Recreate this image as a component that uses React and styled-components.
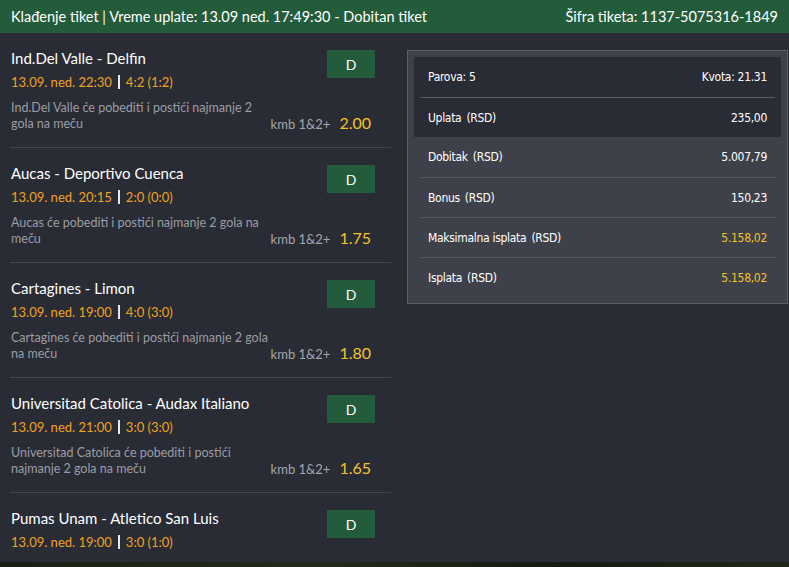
import React from 'react';
import styled, { createGlobalStyle } from 'styled-components';

const GlobalStyle = createGlobalStyle`
  html, body {
    margin: 0;
    padding: 0;
    background: #292c35;
  }
  body {
    font-family: 'Lato', 'Liberation Sans', sans-serif;
  }
`;

const Page = styled.div`
  width: 789px;
  height: 567px;
  display: flex;
  flex-direction: column;
  overflow: hidden;
  background: #292c35;
`;

const Header = styled.div`
  height: 33px;
  flex-shrink: 0;
  background: #235c3b;
  color: #fff;
  display: flex;
  align-items: center;
  justify-content: space-between;
  padding: 0 11px;
  font-size: 14.5px;
`;

const Body = styled.div`
  flex: 1;
  display: flex;
  align-items: flex-start;
  overflow: hidden;
  padding-left: 10px;
`;

const Footer = styled.div`
  height: 5px;
  flex-shrink: 0;
  background: linear-gradient(90deg, #1b1e17, #232a1e 40%, #171a14 70%, #20261b);
`;

const List = styled.div`
  width: 381px;
  flex-shrink: 0;
`;

const Match = styled.div`
  height: 115px;
  box-sizing: border-box;
  border-bottom: 1px solid #43464e;
  padding: 15px 0 0 1px;
  position: relative;
`;

const Title = styled.div`
  color: #fff;
  font-size: 15px;
  line-height: 20px;
`;

const When = styled.div`
  color: #f0a21f;
  font-size: 13px;
  line-height: 16px;
  margin-top: 6px;
  display: flex;
  align-items: center;
`;

const Bar = styled.span`
  display: inline-block;
  width: 2px;
  height: 14px;
  background: #e8e8e8;
  margin: 0 6px;
`;

const Pick = styled.div`
  display: flex;
  align-items: flex-end;
  justify-content: space-between;
  margin-top: 10px;
  width: 360px;
`;

const Desc = styled.div`
  color: #9b9da4;
  font-size: 12.5px;
  line-height: 16px;
  width: 265px;
`;

const Market = styled.div`
  display: flex;
  align-items: baseline;
  flex-shrink: 0;
  white-space: nowrap;
  gap: 9px;
  color: #a4a6ad;
  font-size: 13px;
`;

const Odd = styled.span`
  color: #f5c22b;
  font-size: 16px;
`;

const Badge = styled.div`
  width: 48px;
  height: 28px;
  background: #235c3b;
  color: #fff;
  font-size: 14px;
  display: flex;
  align-items: center;
  justify-content: center;
  position: absolute;
  right: 16px;
  top: 17px;
`;

const Summary = styled.div`
  margin: 17px 0 0 16px;
  width: 381px;
  box-sizing: border-box;
  border: 1px solid #5b5e66;
  background: #3f414a;
  padding: 6px;
  font-family: 'DejaVu Sans', sans-serif;
  font-stretch: condensed;
  color: #fff;
  font-size: 12px;
  letter-spacing: -0.3px;
`;

const Stake = styled.div`
  background: #292c35;
  padding: 0 6px;
`;

const Row = styled.div`
  height: 40px;
  display: flex;
  align-items: center;
  justify-content: space-between;
  padding: 0 8px;
  border-top: ${({ $first }) => ($first ? 'none' : '1px solid #575a62')};
  box-sizing: border-box;
  margin: 0 ${({ $inset }) => ($inset ? '0' : '6px')};
`;

const Value = styled.span`
  color: ${({ $gold }) => ($gold ? '#f5c22b' : '#fff')};
`;

const Unit = styled.span`
  margin-left: 5px;
`;

const matches = [
  {
    title: 'Ind.Del Valle - Delfin',
    time: '13.09. ned. 22:30',
    score: '4:2 (1:2)',
    desc: 'Ind.Del Valle će pobediti i postići najmanje 2 gola na meču',
    odd: '2.00',
  },
  {
    title: 'Aucas - Deportivo Cuenca',
    time: '13.09. ned. 20:15',
    score: '2:0 (0:0)',
    desc: 'Aucas će pobediti i postići najmanje 2 gola na meču',
    odd: '1.75',
  },
  {
    title: 'Cartagines - Limon',
    time: '13.09. ned. 19:00',
    score: '4:0 (3:0)',
    desc: 'Cartagines će pobediti i postići najmanje 2 gola na meču',
    odd: '1.80',
  },
  {
    title: 'Universitad Catolica - Audax Italiano',
    time: '13.09. ned. 21:00',
    score: '3:0 (3:0)',
    desc: 'Universitad Catolica će pobediti i postići najmanje 2 gola na meču',
    odd: '1.65',
  },
  {
    // cut off by the viewport, pick row not visible
    title: 'Pumas Unam - Atletico San Luis',
    time: '13.09. ned. 19:00',
    score: '3:0 (1:0)',
  },
];

const totals = [
  { label: 'Dobitak', value: '5.007,79' },
  { label: 'Bonus', value: '150,23' },
  { label: 'Maksimalna isplata', value: '5.158,02', gold: true },
  { label: 'Isplata', value: '5.158,02', gold: true },
];

const App = () => (
  <Page>
    <GlobalStyle />
    <Header>
      <span>Klađenje tiket | Vreme uplate: 13.09 ned. 17:49:30 - Dobitan tiket</span>
      <span>Šifra tiketa: 1137-5075316-1849</span>
    </Header>
    <Body>
      <List>
        {matches.map((m) => (
          <Match key={m.title}>
            <Title>{m.title}</Title>
            <When>
              {m.time}
              <Bar />
              {m.score}
            </When>
            {m.desc && (
              <Pick>
                <Desc>{m.desc}</Desc>
                <Market>
                  kmb 1&amp;2+ <Odd>{m.odd}</Odd>
                </Market>
              </Pick>
            )}
            <Badge>D</Badge>
          </Match>
        ))}
      </List>
      <Summary>
        <Stake>
          <Row $first $inset>
            <span>Parova: 5</span>
            <span>Kvota: 21.31</span>
          </Row>
          <Row $inset>
            <span>
              Uplata<Unit>(RSD)</Unit>
            </span>
            <Value>235,00</Value>
          </Row>
        </Stake>
        {totals.map((t, i) => (
          <Row key={t.label} $first={i === 0}>
            <span>
              {t.label}
              <Unit>(RSD)</Unit>
            </span>
            <Value $gold={t.gold}>{t.value}</Value>
          </Row>
        ))}
      </Summary>
    </Body>
    <Footer />
  </Page>
);

export default App;
